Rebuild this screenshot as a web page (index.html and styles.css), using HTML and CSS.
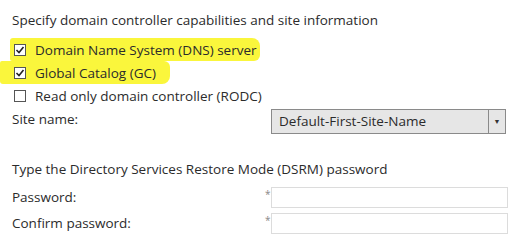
FILE: index.html
```html
<!DOCTYPE html>
<html>
<head>
  <title>Domain Controller Options</title>
  <link rel="stylesheet" href="styles.css">
</head>
<body>
  <div class="painel">
    <p class="titulo">Specify domain controller capabilities and site information</p>

    <div class="opcoes">
      <div class="opcao marcado-dns">
        <svg class="caixa" width="12" height="12" viewBox="0 0 12 12"><rect x="0.5" y="0.5" width="11" height="11" fill="#fff" stroke="#555"/><path d="M2.5 6 L5 8.5 L9.5 3" fill="none" stroke="#222" stroke-width="1.6"/></svg>
        <span>Domain Name System (DNS) server</span>
      </div>
      <div class="opcao marcado-gc">
        <svg class="caixa" width="12" height="12" viewBox="0 0 12 12"><rect x="0.5" y="0.5" width="11" height="11" fill="#fff" stroke="#555"/><path d="M2.5 6 L5 8.5 L9.5 3" fill="none" stroke="#222" stroke-width="1.6"/></svg>
        <span>Global Catalog (GC)</span>
      </div>
      <div class="opcao">
        <svg class="caixa" width="12" height="12" viewBox="0 0 12 12"><rect x="0.5" y="0.5" width="11" height="11" fill="#fff" stroke="#555"/></svg>
        <span>Read only domain controller (RODC)</span>
      </div>
    </div>

    <div class="linha linha-site">
      <span class="rotulo">Site name:</span>
      <div class="combo">
        <span class="combo-texto">Default-First-Site-Name</span>
        <span class="combo-seta">&#9660;</span>
      </div>
    </div>

    <p class="titulo titulo-dsrm">Type the Directory Services Restore Mode (DSRM) password</p>

    <div class="linha linha-senha">
      <span class="rotulo">Password:</span>
      <span class="asterisco">*</span>
      <div class="campo"></div>
    </div>
    <div class="linha linha-senha">
      <span class="rotulo">Confirm password:</span>
      <span class="asterisco">*</span>
      <div class="campo"></div>
    </div>
  </div>
</body>
</html>
```

FILE: styles.css
```css
/* Fundo e texto */
body {
  margin: 0;
  background-color: #fff;
  color: #2b2b2b;
  font-family: "Open Sans", "Noto Sans", sans-serif;
  font-size: 13.5px;
}

.painel {
  padding: 10px 0 0 12px;
}

.titulo {
  margin: 0;
  height: 20px;
  line-height: 20px;
}

.opcoes {
  margin-top: 8px;
  padding-left: 2px;
}

.opcao {
  display: flex;
  width: fit-content;
  align-items: center;
  gap: 9px;
  height: 23px;
}

.opcao:last-child {
  height: 24px;
}

.caixa {
  flex: none;
}

.marcado-dns {
  background-color: #faf63c;
  margin-left: -4px;
  padding: 0 3px 0 4px;
  border-radius: 3px 8px 6px 2px;
}

.marcado-gc {
  background-color: #faf63c;
  margin-left: -14px;
  padding: 0 14px 0 14px;
  border-radius: 2px 6px 8px 3px;
}

.linha {
  display: flex;
  align-items: center;
  height: 27px;
}

.rotulo {
  width: 253px;
  flex: none;
}

.linha-site .rotulo {
  width: 259px;
  padding-bottom: 5px;
}

.combo {
  display: flex;
  width: 233px;
  height: 23px;
  border: 1px solid #8a8a8a;
  background-color: #e6e6e6;
}

.combo-texto {
  flex: 1;
  padding-left: 7px;
  line-height: 23px;
}

.combo-seta {
  width: 16px;
  border-left: 1px solid #8a8a8a;
  font-size: 7px;
  line-height: 23px;
  text-align: center;
  color: #333;
}

.titulo-dsrm {
  margin-top: 24px;
  margin-bottom: 5px;
}

.linha-senha {
  height: 26px;
}

.asterisco {
  width: 6px;
  color: #888;
  font-size: 10px;
  align-self: flex-start;
  margin-top: 3px;
}

.campo {
  width: 235px;
  height: 19px;
  border: 1px solid #dcdcdc;
  background-color: #fff;
}
```
